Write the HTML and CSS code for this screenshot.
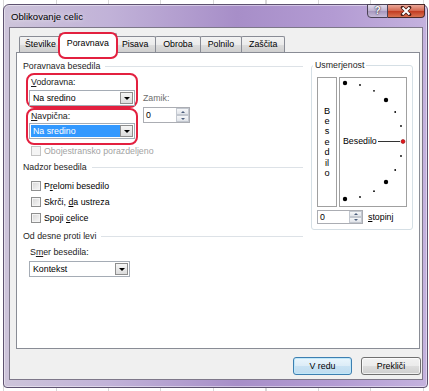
FILE: index.html
```html
<!DOCTYPE html>
<html lang="sl">
<head>
    <meta charset="UTF-8">
    <meta name="viewport" content="width=device-width, initial-scale=1.0">
    <title>Oblikovanje celic</title>
    <link rel="stylesheet" href="styles.css">
</head>
<body>
    <div class="window">
        <div class="titlebar">
            <span class="title">Oblikovanje celic</span>
            <div class="caption-btns">
                <span class="cap-help">?</span>
                <span class="cap-close">
                    <svg width="12" height="10" viewBox="0 0 12 10">
                        <path d="M2.5 1.5 L9.5 8.5 M9.5 1.5 L2.5 8.5" stroke="#4a1d14" stroke-width="3.6" stroke-linecap="round"/>
                        <path d="M2.5 1.5 L9.5 8.5 M9.5 1.5 L2.5 8.5" stroke="#fff" stroke-width="2"/>
                    </svg>
                </span>
            </div>
        </div>
        <div class="client">
            <div class="tabs">
                <span class="tab">Številke</span>
                <span class="tab active">Poravnava</span>
                <span class="tab">Pisava</span>
                <span class="tab">Obroba</span>
                <span class="tab">Polnilo</span>
                <span class="tab">Zaščita</span>
            </div>
            <div class="panel">
                <div class="left">
                    <div class="group-head">Poravnava besedila</div>
                    <div class="align-row">
                        <div class="marks">
                            <div class="mark">
                                <div class="lbl"><u>V</u>odoravna:</div>
                                <div class="combo"><span class="val">Na sredino</span><span class="combo-btn"></span></div>
                            </div>
                            <div class="mark second">
                                <div class="lbl"><u>N</u>avpična:</div>
                                <div class="combo"><span class="val sel">Na sredino</span><span class="combo-btn"></span></div>
                            </div>
                        </div>
                        <div class="indent">
                            <div class="lbl muted">Zamik:</div>
                            <div class="spin">
                                <span class="num">0</span>
                                <span class="spin-btns"><span class="up"></span><span class="down"></span></span>
                            </div>
                        </div>
                    </div>
                    <div class="check-row disabled"><span class="check"></span><span>Obojestransko porazdeljeno</span></div>

                    <div class="group-head gap">Nadzor besedila</div>
                    <div class="checks">
                        <div class="check-row"><span class="check"></span><span>P<u>r</u>elomi besedilo</span></div>
                        <div class="check-row"><span class="check"></span><span>Skrči, <u>d</u>a ustreza</span></div>
                        <div class="check-row"><span class="check"></span><span>Spoji <u>c</u>elice</span></div>
                    </div>

                    <div class="group-head gap">Od desne proti levi</div>
                    <div class="lbl sub">S<u>m</u>er besedila:</div>
                    <div class="combo short"><span class="val">Kontekst</span><span class="combo-btn"></span></div>
                </div>

                <fieldset class="orient">
                    <legend>Usmerjenost</legend>
                    <div class="orient-boxes">
                        <div class="vert"><span>Besedilo</span></div>
                        <div class="dial">
                            <svg width="66" height="128" viewBox="0 0 66 128">
                                <g fill="#000">
                                    <circle cx="5" cy="5" r="2.2"/>
                                    <circle cx="20" cy="7" r="0.9"/>
                                    <circle cx="34" cy="12.8" r="0.9"/>
                                    <circle cx="46" cy="22" r="2.2"/>
                                    <circle cx="55.2" cy="34" r="0.9"/>
                                    <circle cx="61" cy="48" r="0.9"/>
                                    <circle cx="61" cy="78" r="0.9"/>
                                    <circle cx="55.2" cy="92" r="0.9"/>
                                    <circle cx="46" cy="104" r="2.2"/>
                                    <circle cx="34" cy="113.2" r="0.9"/>
                                    <circle cx="20" cy="119" r="0.9"/>
                                    <circle cx="5" cy="121" r="2.2"/>
                                </g>
                                <text x="3" y="66">Besedilo</text>
                                <line x1="38" y1="63.5" x2="60" y2="63.5" stroke="#333" stroke-width="1"/>
                                <circle cx="63" cy="63.5" r="2" fill="#e3161b" stroke="#8b0e10" stroke-width="0.6"/>
                            </svg>
                        </div>
                    </div>
                    <div class="deg-row">
                        <div class="spin deg">
                            <span class="num">0</span>
                            <span class="spin-btns"><span class="up"></span><span class="down"></span></span>
                        </div>
                        <span><u>s</u>topinj</span>
                    </div>
                </fieldset>
            </div>
            <div class="actions">
                <span class="btn default">V redu</span>
                <span class="btn">Prekliči</span>
            </div>
        </div>
    </div>
</body>
</html>
```

FILE: styles.css
```css
* {
    box-sizing: border-box;
}
body {
    margin: 0;
    width: 429px;
    height: 391px;
    overflow: hidden;
    font-family: "Liberation Sans", Arial, sans-serif;
    font-size: 8.8px;
    color: #1b1b1b;
    background: #fff repeating-linear-gradient(90deg, transparent 0 3px, #d8d8d8 3px 4px, transparent 4px 52.5px);
}
.window {
    margin: 4px 0 0 3px;
    width: 425px;
    height: 384px;
    border: 1px solid #5e5270;
    border-radius: 6px 6px 4px 4px;
    background: linear-gradient(90deg, #cdc4da 0%, #c1b2d8 25%, #a78ec8 55%, #b39bd3 78%, #c4b2de 100%);
    box-shadow: inset 0 0 0 1px rgba(255, 255, 255, 0.45);
    padding: 0 4px 7px 5px;
    display: flex;
    flex-direction: column;
}
.titlebar {
    height: 22px;
    display: flex;
    align-items: center;
}
.title {
    padding-left: 2px;
    font-size: 9.6px;
    color: #000;
    text-shadow: 0 0 5px rgba(255, 255, 255, 0.9);
}
.caption-btns {
    margin: -1px -2px 0 auto;
    align-self: flex-start;
    display: flex;
    height: 14px;
}
.cap-help {
    width: 21px;
    border: 1px solid #4a4256;
    border-radius: 0 0 0 4px;
    background: linear-gradient(#e2dbeb, #bcb0cf 50%, #a697bd 51%, #c7bbd9);
    color: #fff;
    font-weight: bold;
    font-size: 10px;
    line-height: 12px;
    text-align: center;
    text-shadow: 0 0 2px #2a2236, 0 0 1px #2a2236;
}
.cap-close {
    width: 37px;
    border: 1px solid #4a2a2a;
    border-left: none;
    border-radius: 0 0 4px 0;
    background: linear-gradient(#eba899, #d3654d 50%, #c13a20 51%, #d97251);
    display: flex;
    align-items: center;
    justify-content: center;
}
.client {
    flex: 1;
    background: #f0f0f0;
    border: 1px solid #7d7789;
    padding: 5px 2px 4px 6px;
    display: flex;
    flex-direction: column;
}
.tabs {
    display: flex;
    align-items: flex-end;
    height: 19px;
    padding-left: 4px;
}
.tab {
    height: 16px;
    padding: 0 7px;
    margin-left: -1px;
    border: 1px solid #898c95;
    border-bottom: none;
    border-radius: 2px 2px 0 0;
    background: linear-gradient(#f3f3f3, #ebebeb 50%, #dddddd 51%, #cfcfcf);
    line-height: 15px;
    color: #000;
}
.tab:first-child {
    padding: 0 5px;
}
.tab.active {
    position: relative;
    z-index: 1;
    height: 20px;
    margin: 0 -2px -1px -3px;
    padding: 0 7px;
    background: #fff;
    line-height: 18px;
}
.tab.active::after {
    content: "";
    position: absolute;
    left: -2px;
    right: -2px;
    top: -2px;
    bottom: -6px;
    border: 2px solid #e3203f;
    border-radius: 7px;
}
.panel {
    flex: 1;
    background: #fff;
    border: 1px solid #898c95;
    padding: 7px 6px 0 6px;
    display: flex;
    gap: 8px;
}
.left {
    width: 280px;
    display: flex;
    flex-direction: column;
}
.group-head {
    display: flex;
    align-items: center;
    gap: 5px;
    height: 12px;
    line-height: 12px;
    color: #1e1e1e;
}
.group-head::after {
    content: "";
    flex: 1;
    border-top: 1px solid #dde2e7;
}
.group-head.gap {
    margin-top: 4px;
}
.align-row {
    display: flex;
    gap: 5px;
    margin: 1px 0 0 3px;
}
.mark {
    width: 112px;
    border: 2px solid #e3203f;
    border-radius: 8px;
    padding: 1px 1px 0 1px;
}
.mark .combo {
    margin-top: 2px;
}
.mark.second {
    padding: 0 1px 4px 1px;
}
.mark.second .combo {
    margin-top: 1px;
}
.lbl {
    height: 12px;
    line-height: 12px;
    padding-left: 2px;
}
.lbl.muted {
    color: #6d6d6d;
    padding-left: 0;
}
.lbl.sub {
    margin-top: 4px;
    padding-left: 7px;
}
.combo {
    display: flex;
    width: 106px;
    height: 16px;
    border: 1px solid #a5acb5;
    background: #fff;
    padding: 1px;
}
.combo.short {
    width: 101px;
    margin: 3px 0 0 6px;
}
.val {
    flex: 1;
    padding-left: 2px;
    line-height: 12px;
    color: #000;
}
.val.sel {
    background: #3399ff;
    color: #fff;
}
.combo-btn {
    width: 13px;
    border: 1px solid #8e8e8e;
    background: linear-gradient(#f6f6f6, #dcdcdc);
    display: flex;
    align-items: center;
    justify-content: center;
}
.combo-btn::after {
    content: "";
    border-left: 3px solid transparent;
    border-right: 3px solid transparent;
    border-top: 3px solid #000;
}
.indent {
    padding-top: 19px;
}
.spin {
    display: flex;
    width: 47px;
    height: 16px;
    margin-top: 3px;
    border: 1px solid #abadb3;
    background: #fff;
}
.spin .num {
    flex: 1;
    padding-left: 2px;
    line-height: 14px;
    color: #000;
}
.spin-btns {
    width: 13px;
    display: flex;
    flex-direction: column;
}
.spin-btns span {
    flex: 1;
    border: 1px solid #c3c8d0;
    background: linear-gradient(#f6f7f9, #e1e4e9);
    display: flex;
    align-items: center;
    justify-content: center;
}
.spin-btns .up::after,
.spin-btns .down::after {
    content: "";
    border-left: 2px solid transparent;
    border-right: 2px solid transparent;
}
.spin-btns .up::after {
    border-bottom: 2px solid #4c5e7d;
}
.spin-btns .down::after {
    border-top: 2px solid #4c5e7d;
}
.check-row {
    display: flex;
    align-items: center;
    gap: 3px;
    height: 16px;
    padding-left: 8px;
    color: #000;
}
.check-row.disabled {
    height: 12px;
    color: #a3a3a3;
}
.checks {
    margin-top: 5px;
}
.check {
    width: 10px;
    height: 10px;
    border: 1px solid #8e8f8f;
    background: linear-gradient(135deg, #d6d6d6, #f8f8f8);
    box-shadow: inset 0 0 0 1px #f4f4f4;
}
.disabled .check {
    border-color: #c4c4c4;
    background: #f4f4f4;
}
.orient {
    margin: -1px 0 0 0;
    width: 102px;
    min-width: 0;
    align-self: flex-start;
    border: 1px solid #d5dfe5;
    border-radius: 3px;
    padding: 6px 4px 5px 5px;
}
.orient legend {
    margin-left: -4px;
    padding: 0 2px;
    line-height: 12px;
    color: #1e1e1e;
}
.orient-boxes {
    display: flex;
    gap: 2px;
    height: 130px;
}
.vert {
    width: 20px;
    border: 1px solid #a0a0a0;
    display: flex;
    align-items: center;
    justify-content: center;
}
.vert span {
    width: min-content;
    word-break: break-all;
    text-align: center;
    line-height: 10.4px;
    font-size: 9.2px;
    color: #000;
}
.dial {
    width: 68px;
    border: 1px solid #a0a0a0;
}
.dial svg {
    display: block;
    font-size: 8.8px;
}
.deg-row {
    display: flex;
    align-items: center;
    gap: 5px;
    margin-top: 3px;
    color: #000;
}
.spin.deg {
    width: 46px;
    height: 14px;
    margin-top: 0;
}
.spin.deg .num {
    line-height: 12px;
}
.actions {
    display: flex;
    justify-content: flex-end;
    gap: 9px;
    height: 18px;
    margin: 8px -1px 0 0;
}
.btn {
    width: 60px;
    border: 1px solid #707070;
    border-radius: 3px;
    background: linear-gradient(#f2f2f2, #ebebeb 50%, #dddddd 51%, #cfcfcf);
    box-shadow: inset 0 0 0 1px rgba(255, 255, 255, 0.7);
    display: flex;
    align-items: center;
    justify-content: center;
    color: #000;
}
.btn.default {
    width: 59px;
    border-color: #3c7fb1;
    background: linear-gradient(#eaf6fd, #dcecf7 50%, #c9e2f3 51%, #bedcf0);
    box-shadow: inset 0 0 0 1px #bfe7f9;
}
```
